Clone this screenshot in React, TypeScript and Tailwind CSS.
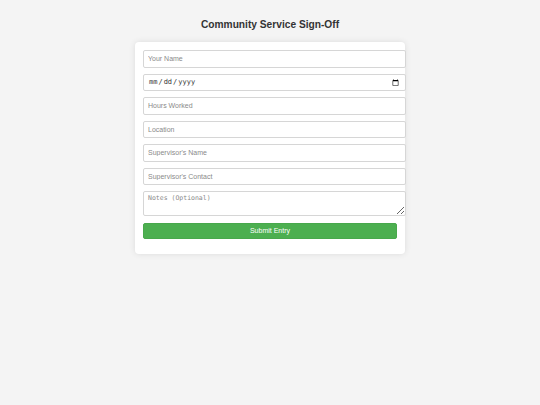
import React from "react";

const fieldCls =
  "block w-[263px] h-[17.5px] px-[4px] border border-[#d6d6d6] rounded-[2px] bg-white text-[7px] text-[#222] placeholder:text-[#8a8a8a] outline-none";

export default function App() {
  const fields = ["Your Name", "date", "Hours Worked", "Location", "Supervisor's Name", "Supervisor's Contact"];

  return (
    <div className="min-h-[405px] w-full bg-[#f4f4f4] font-['Liberation_Sans',Arial,sans-serif] pt-[18px]">
      <h1 className="text-center text-[10.2px] font-bold text-[#333] leading-[13px]">Community Service Sign-Off</h1>
      <div className="mx-auto mt-[11px] w-[270px] bg-white rounded-[4px] shadow-[0_0_6px_rgba(0,0,0,0.1)] pt-[8px] pb-[15px] px-[8px]">
        <form className="flex flex-col gap-[6px]">
          {fields.map((f) =>
            f === "date" ? (
              <input
                key={f}
                type="date"
                className={fieldCls + " font-['DejaVu_Sans_Mono',monospace] text-[6.5px] text-[#333]"}
              />
            ) : (
              <input key={f} type="text" placeholder={f} className={fieldCls} />
            )
          )}
          <textarea
            placeholder="Notes (Optional)"
            className="block w-[263px] h-[25px] px-[4px] py-[2px] border border-[#d6d6d6] rounded-[2px] bg-white text-[6.5px] leading-[9px] font-['DejaVu_Sans_Mono',monospace] text-[#222] placeholder:text-[#8a8a8a] outline-none"
          />
          <button
            type="button"
            className="mt-[1px] w-full h-[16px] bg-[#4caf50] text-white text-[7px] rounded-[2px] border border-[#48a84c]"
          >
            Submit Entry
          </button>
        </form>
      </div>
    </div>
  );
}
